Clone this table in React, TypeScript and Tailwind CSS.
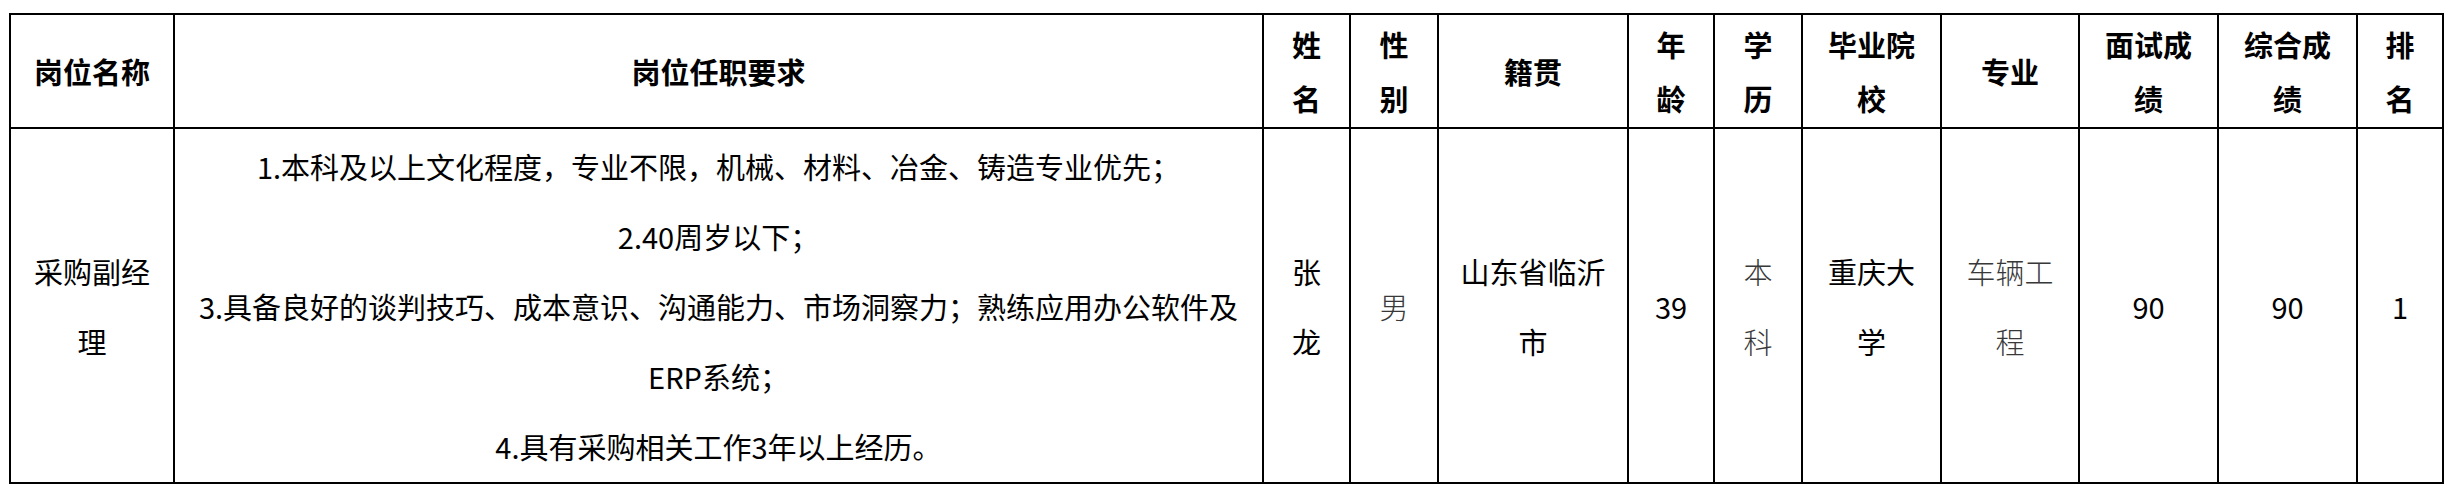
const headers: React.ReactNode[] = [
  "岗位名称",
  "岗位任职要求",
  <>姓<br />名</>,
  <>性<br />别</>,
  "籍贯",
  <>年<br />龄</>,
  <>学<br />历</>,
  <>毕业院<br />校</>,
  "专业",
  <>面试成<br />绩</>,
  <>综合成<br />绩</>,
  <>排<br />名</>,
];

const requirements = [
  "1.本科及以上文化程度，专业不限，机械、材料、冶金、铸造专业优先；",
  "2.40周岁以下；",
  "3.具备良好的谈判技巧、成本意识、沟通能力、市场洞察力；熟练应用办公软件及",
  "ERP系统；",
  "4.具有采购相关工作3年以上经历。",
];

function Cell({ children, className = "" }: { children?: React.ReactNode; className?: string }) {
  return (
    <div className={`bg-white flex items-center justify-center text-center ${className}`}>
      <div>{children}</div>
    </div>
  );
}

export default function App() {
  const soft = "text-[#383838] font-light";

  return (
    <div className="min-h-screen bg-white pl-[9px] pt-[13px] font-['Noto_Sans_CJK_SC',sans-serif] text-[29px] text-black">
      <div className="inline-grid grid-cols-[162px_1087px_85px_86px_188px_84px_86px_137px_136px_137px_137px_84px] grid-rows-[112px_353px] gap-[2px] p-[2px] bg-black">
        {headers.map((h, i) => (
          <Cell key={i} className="font-bold leading-[54px]">
            {h}
          </Cell>
        ))}

        <Cell className="leading-[70px]">
          采购副经<br />理
        </Cell>
        <Cell className="leading-[70px] whitespace-nowrap">
          {requirements.map((line) => (
            <div key={line}>{line}</div>
          ))}
        </Cell>
        <Cell className="leading-[70px]">
          张<br />龙
        </Cell>
        <Cell className={`leading-[70px] ${soft}`}>男</Cell>
        <Cell className="leading-[70px]">
          山东省临沂<br />市
        </Cell>
        <Cell className="leading-[70px]">39</Cell>
        <Cell className={`leading-[70px] ${soft}`}>
          本<br />科
        </Cell>
        <Cell className="leading-[70px]">
          重庆大<br />学
        </Cell>
        <Cell className={`leading-[70px] ${soft}`}>
          车辆工<br />程
        </Cell>
        <Cell className="leading-[70px]">90</Cell>
        <Cell className="leading-[70px]">90</Cell>
        <Cell className="leading-[70px]">1</Cell>
      </div>
    </div>
  );
}
